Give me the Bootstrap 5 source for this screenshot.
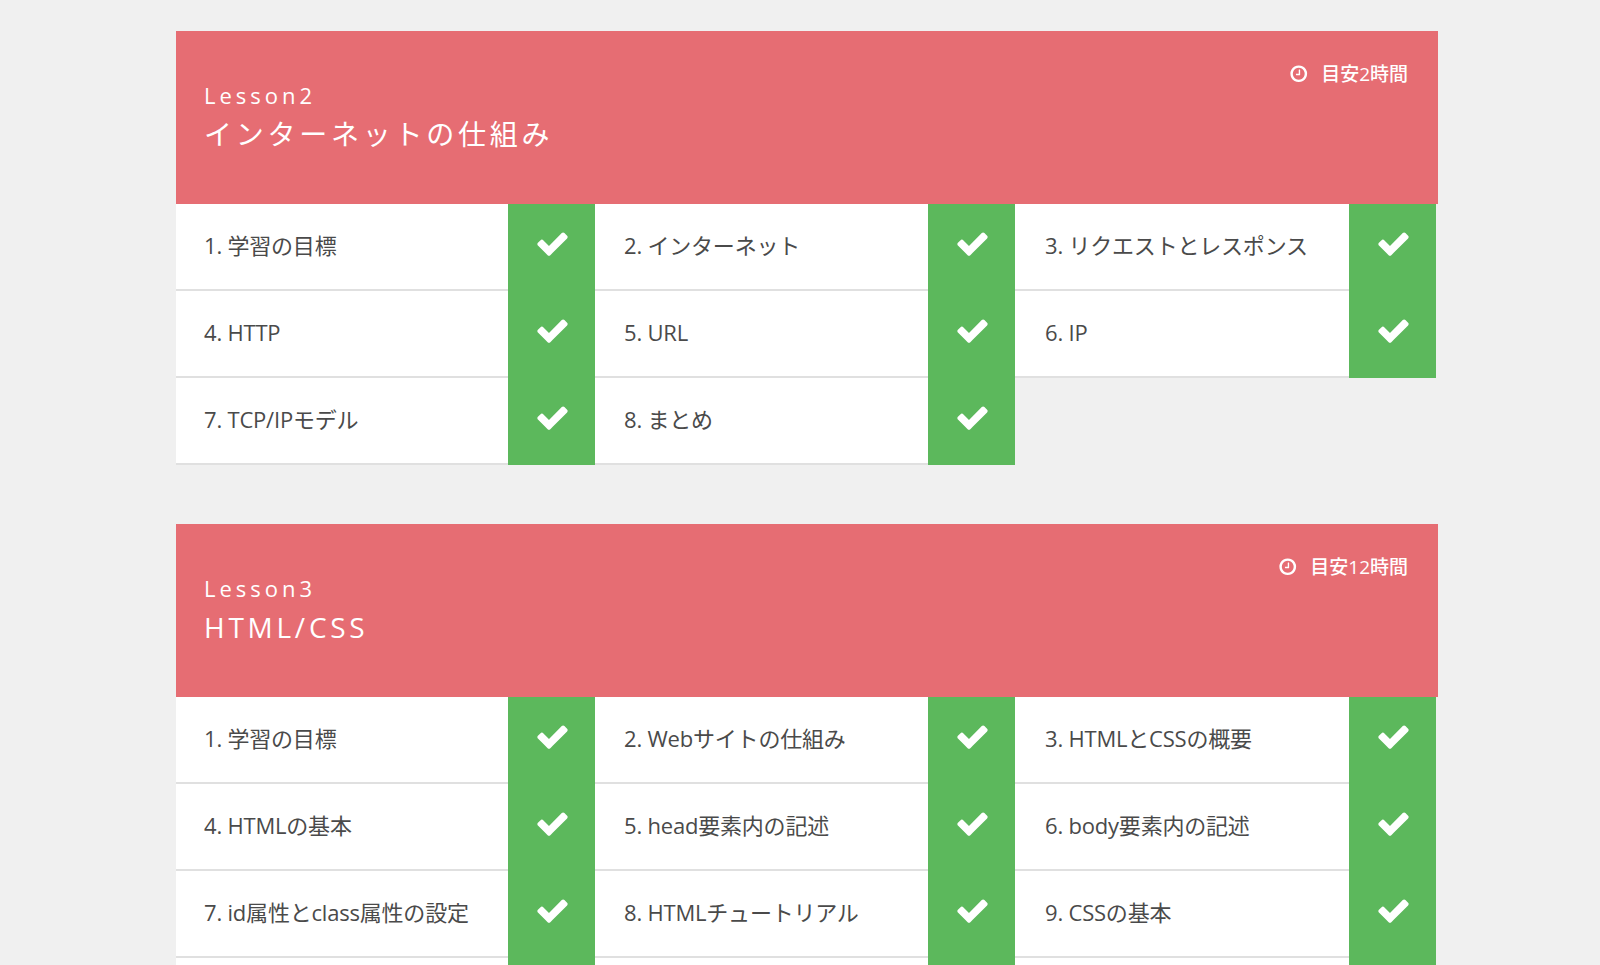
<!DOCTYPE html>
<html lang="ja">
<head>
<meta charset="utf-8">
<title>Lessons</title>
<link rel="stylesheet" href="https://cdn.jsdelivr.net/npm/bootstrap@5.3.0/dist/css/bootstrap.min.css">
<style>
html,body{height:965px;overflow:hidden}
body{background:#f0f0f0;font-family:"Open Sans","Noto Sans CJK JP",sans-serif;color:#4a4a4a}
.page-wrap{width:1262px;margin-left:176px;padding-top:31px}
.lesson-box{margin-bottom:59px}
.lesson-head{height:173px;background:#e66d73;color:#fff;padding:52px 30px 0 28px}
.lesson-no{font-size:22px;line-height:26px;letter-spacing:4px;margin-bottom:7px}
.lesson-title{font-size:28px;line-height:38px;letter-spacing:3.75px;margin:0;font-weight:400}
.lesson-time{font-size:19px;line-height:24px;margin-top:-21px;margin-bottom:-4px;gap:13px;font-weight:500}
.lesson-time svg{width:19.5px;height:19.5px;fill:#fff}
.lesson-items{width:1260px}
.step-item{width:420px;height:87px;background:#fff}
.step-item:nth-child(3n+1){width:419px}
.step-item:nth-child(3n){width:421px}
.step-name{flex:1;border-bottom:2px solid #e0e0e0;padding-left:29px;padding-bottom:3px;font-size:22px;letter-spacing:-.2px;white-space:nowrap}
.step-item:nth-child(3n+1) .step-name{padding-left:28px}
.step-item:nth-child(3n) .step-name{padding-left:30px}
.step-done{width:87px;background:#5cb85c}
.step-done svg{width:35px;height:35px;fill:#fff;margin-bottom:8px;margin-left:2px}
</style>
</head>
<body>
<svg width="0" height="0" class="d-block">
<symbol id="ic-check" viewBox="0 0 1792 1792"><path d="M1671 566q0 40-28 68l-724 724-136 136q-28 28-68 28t-68-28l-136-136-362-362q-28-28-28-68t28-68l136-136q28-28 68-28t68 28l294 295 656-657q28-28 68-28t68 28l136 136q28 28 28 68z"/></symbol>
<symbol id="ic-clock" viewBox="0 0 1792 1792"><path d="M1024 544v448q0 14-9 23t-23 9h-320q-14 0-23-9t-9-23v-64q0-14 9-23t23-9h224v-352q0-14 9-23t23-9h64q14 0 23 9t9 23zm416 352q0-148-73-273t-198-198-273-73-273 73-198 198-73 273 73 273 198 198 273 73 273-73 198-198 73-273zm224 0q0 209-103 385.5t-279.5 279.5-385.5 103-385.5-103-279.5-279.5-103-385.5 103-385.5 279.5-279.5 385.5-103 385.5 103 279.5 279.5 103 385.5z"/></symbol>
</svg>
<div class="page-wrap">
<section class="lesson-box">
  <div class="lesson-head">
    <div class="lesson-time d-flex justify-content-end align-items-center"><svg><use href="#ic-clock"/></svg><span>目安2時間</span></div>
    <div class="lesson-no">Lesson2</div>
    <h2 class="lesson-title">インターネットの仕組み</h2>
  </div>
  <div class="lesson-items d-flex flex-wrap">
    <div class="step-item d-flex"><div class="step-name d-flex align-items-center">1. 学習の目標</div><div class="step-done d-flex align-items-center justify-content-center"><svg><use href="#ic-check"/></svg></div></div>
    <div class="step-item d-flex"><div class="step-name d-flex align-items-center">2. インターネット</div><div class="step-done d-flex align-items-center justify-content-center"><svg><use href="#ic-check"/></svg></div></div>
    <div class="step-item d-flex"><div class="step-name d-flex align-items-center">3. リクエストとレスポンス</div><div class="step-done d-flex align-items-center justify-content-center"><svg><use href="#ic-check"/></svg></div></div>
    <div class="step-item d-flex"><div class="step-name d-flex align-items-center">4. HTTP</div><div class="step-done d-flex align-items-center justify-content-center"><svg><use href="#ic-check"/></svg></div></div>
    <div class="step-item d-flex"><div class="step-name d-flex align-items-center">5. URL</div><div class="step-done d-flex align-items-center justify-content-center"><svg><use href="#ic-check"/></svg></div></div>
    <div class="step-item d-flex"><div class="step-name d-flex align-items-center">6. IP</div><div class="step-done d-flex align-items-center justify-content-center"><svg><use href="#ic-check"/></svg></div></div>
    <div class="step-item d-flex"><div class="step-name d-flex align-items-center">7. TCP/IPモデル</div><div class="step-done d-flex align-items-center justify-content-center"><svg><use href="#ic-check"/></svg></div></div>
    <div class="step-item d-flex"><div class="step-name d-flex align-items-center">8. まとめ</div><div class="step-done d-flex align-items-center justify-content-center"><svg><use href="#ic-check"/></svg></div></div>
  </div>
</section>
<section class="lesson-box">
  <div class="lesson-head">
    <div class="lesson-time d-flex justify-content-end align-items-center"><svg><use href="#ic-clock"/></svg><span>目安12時間</span></div>
    <div class="lesson-no">Lesson3</div>
    <h2 class="lesson-title">HTML/CSS</h2>
  </div>
  <div class="lesson-items d-flex flex-wrap">
    <div class="step-item d-flex"><div class="step-name d-flex align-items-center">1. 学習の目標</div><div class="step-done d-flex align-items-center justify-content-center"><svg><use href="#ic-check"/></svg></div></div>
    <div class="step-item d-flex"><div class="step-name d-flex align-items-center">2. Webサイトの仕組み</div><div class="step-done d-flex align-items-center justify-content-center"><svg><use href="#ic-check"/></svg></div></div>
    <div class="step-item d-flex"><div class="step-name d-flex align-items-center">3. HTMLとCSSの概要</div><div class="step-done d-flex align-items-center justify-content-center"><svg><use href="#ic-check"/></svg></div></div>
    <div class="step-item d-flex"><div class="step-name d-flex align-items-center">4. HTMLの基本</div><div class="step-done d-flex align-items-center justify-content-center"><svg><use href="#ic-check"/></svg></div></div>
    <div class="step-item d-flex"><div class="step-name d-flex align-items-center">5. head要素内の記述</div><div class="step-done d-flex align-items-center justify-content-center"><svg><use href="#ic-check"/></svg></div></div>
    <div class="step-item d-flex"><div class="step-name d-flex align-items-center">6. body要素内の記述</div><div class="step-done d-flex align-items-center justify-content-center"><svg><use href="#ic-check"/></svg></div></div>
    <div class="step-item d-flex"><div class="step-name d-flex align-items-center">7. id属性とclass属性の設定</div><div class="step-done d-flex align-items-center justify-content-center"><svg><use href="#ic-check"/></svg></div></div>
    <div class="step-item d-flex"><div class="step-name d-flex align-items-center">8. HTMLチュートリアル</div><div class="step-done d-flex align-items-center justify-content-center"><svg><use href="#ic-check"/></svg></div></div>
    <div class="step-item d-flex"><div class="step-name d-flex align-items-center">9. CSSの基本</div><div class="step-done d-flex align-items-center justify-content-center"><svg><use href="#ic-check"/></svg></div></div>
    <div class="step-item d-flex"><div class="step-name"></div><div class="step-done"></div></div>
    <div class="step-item d-flex"><div class="step-name"></div><div class="step-done"></div></div>
    <div class="step-item d-flex"><div class="step-name"></div><div class="step-done"></div></div>
  </div>
</section>
</div>
<script src="https://cdn.jsdelivr.net/npm/bootstrap@5.3.0/dist/js/bootstrap.bundle.min.js"></script>
</body>
</html>
